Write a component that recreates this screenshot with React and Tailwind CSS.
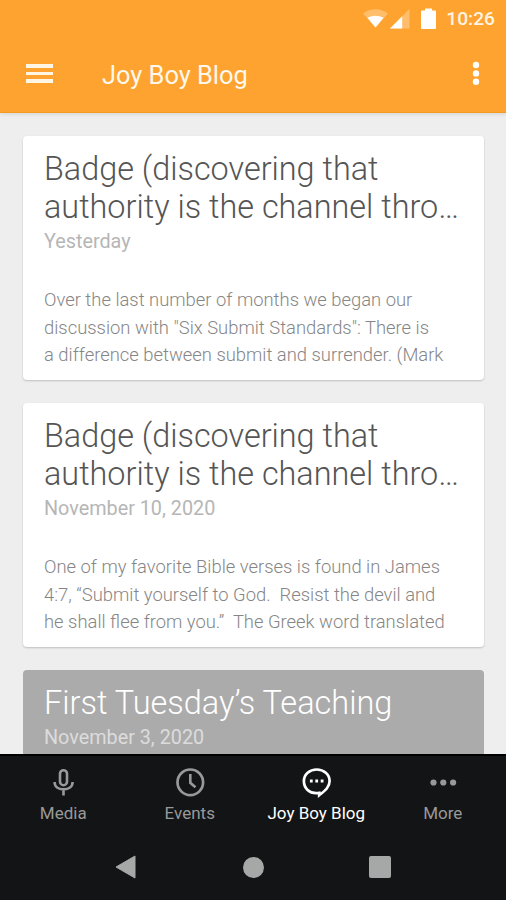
import React from 'react';

const posts = [
  {
    title: ['Badge (discovering that', 'authority is the channel thro…'],
    date: 'Yesterday',
    body: [
      'Over the last number of months we began our',
      'discussion with "Six Submit Standards": There is',
      'a difference between submit and surrender. (Mark',
    ],
  },
  {
    title: ['Badge (discovering that', 'authority is the channel thro…'],
    date: 'November 10, 2020',
    body: [
      'One of my favorite Bible verses is found in James',
      '4:7, “Submit yourself to God.  Resist the devil and',
      'he shall flee from you.”  The Greek word translated',
    ],
  },
];

function StatusBar() {
  return (
    <div className="flex h-[37px] items-center justify-end pr-[11px]">
      <svg width="25" height="20" viewBox="0 0 25 20" className="mr-[2px]">
        <path d="M0 4.4Q12.5 -4 25 4.4L12.5 18.5Z" fill="#ffbe6c" />
        <path d="M4.4 8.8Q12.5 4.6 20.6 8.8L12.5 18.5Z" fill="#fff" />
      </svg>
      <svg width="20" height="20" viewBox="0 0 20 20" className="mr-[11px]">
        <path d="M19.5 0V19.5H0Z" fill="#ffbe6c" />
        <path d="M12.2 7.3V19.5H0Z" fill="#fff" />
      </svg>
      <svg width="15" height="22" viewBox="0 0 15 22" className="mr-[10px]">
        <path d="M4 0.5H11V2.5H14Q15 2.5 15 3.5V20Q15 21 14 21H1Q0 21 0 20V3.5Q0 2.5 1 2.5H4Z" fill="#fff" />
      </svg>
      <span className="text-[19.2px] font-medium leading-[22px] text-[#fff4e2]">10:26</span>
    </div>
  );
}

function Header() {
  return (
    <header className="relative z-10 h-[113px] shrink-0 border-b border-[#f29b20] bg-[#fea32f] shadow-[0_1px_4px_rgba(0,0,0,0.12)]">
      <StatusBar />
      <div className="flex h-[75px] items-center pl-[26px] pr-[26px]">
        <div className="-mt-[2px] flex w-[27px] flex-col gap-1">
          <span className="h-[3.5px] bg-[#fff6e4]" />
          <span className="h-[3.5px] bg-[#fff6e4]" />
          <span className="h-[3.5px] bg-[#fff6e4]" />
        </div>
        <h1 className="ml-[49px] whitespace-nowrap text-[25.4px] leading-8 text-[#fff8ec]">Joy Boy Blog</h1>
        <svg width="8" height="24" viewBox="0 0 8 24" className="-mt-[3px] ml-auto" fill="#fff">
          <circle cx="4" cy="4" r="3.2" />
          <circle cx="4" cy="12.4" r="3.2" />
          <circle cx="4" cy="20.8" r="3.2" />
        </svg>
      </div>
    </header>
  );
}

function PostCard({ post }) {
  return (
    <article className="h-[244px] shrink-0 whitespace-pre rounded-[4px] bg-white pl-[21px] pt-[14px] font-light shadow-[0_1px_2px_rgba(0,0,0,0.2)]">
      <h2 className="text-[32.4px] leading-[38px] text-[#555]">
        {post.title.map((line) => (
          <div key={line}>{line}</div>
        ))}
      </h2>
      <p className="mt-[4px] text-[19.8px] font-normal leading-6 text-[#b6b6b6]">{post.date}</p>
      <div className="mt-[32px] text-[18.4px] leading-[27.5px] text-[#868686]">
        {post.body.map((line) => (
          <div key={line}>{line}</div>
        ))}
      </div>
    </article>
  );
}

function Tab({ label, active, children }) {
  return (
    <div className={`flex flex-1 flex-col items-center ${active ? 'text-white' : 'text-[#999]'}`}>
      <svg width="32" height="32" viewBox="0 0 32 32" fill="none" stroke="currentColor">
        {children}
      </svg>
      <span className="mt-[5px] whitespace-nowrap text-[17px] leading-5">{label}</span>
    </div>
  );
}

export default function App() {
  return (
    <div className="flex h-[900px] w-[506px] flex-col overflow-hidden bg-[#eeeeee] font-['Roboto',sans-serif]">
      <Header />
      <main className="flex min-h-0 flex-1 flex-col gap-[23px] overflow-hidden pl-[23px] pr-[22px] pt-[23px]">
        {posts.map((post) => (
          <PostCard key={post.date} post={post} />
        ))}
        <article className="h-[244px] shrink-0 whitespace-nowrap rounded-[4px] bg-[#ababab] pl-[21px] pt-[14px]">
          <h2 className="text-[32.5px] font-light leading-[38px] text-white">First Tuesday’s Teaching</h2>
          <p className="mt-[4px] text-[19.8px] leading-6 text-[#dcdcdc]">November 3, 2020</p>
        </article>
      </main>
      <footer className="h-[146px] shrink-0 border-t-2 border-black bg-[#121415]">
        <nav className="flex pt-[10px]">
          <Tab label="Media">
            <rect x="13" y="4.2" width="7" height="15" rx="3.5" strokeWidth="2.6" />
            <path d="M7.6 16C7.6 21 11.4 23.4 16.5 23.4S25.6 21 25.6 16M16.5 23.4V29.6" strokeWidth="2.6" />
          </Tab>
          <Tab label="Events">
            <circle cx="16.3" cy="16.3" r="12.8" strokeWidth="2.7" />
            <path d="M16.3 8V16.8L21.5 21.2" strokeWidth="2.6" />
          </Tab>
          <Tab label="Joy Boy Blog" active>
            <path d="M17.8 27.1C9 28 3.9 21.8 3.9 15.3C3.9 8.2 9.6 3.5 16.7 3.5S29.6 8.2 29.6 15C29.6 21.5 24.5 25 19.2 29.2V26.9Z" strokeWidth="2.7" />
            <path d="M9.9 15H12.7M15.3 15H18.1M20.7 15H23.5" strokeWidth="2.8" />
          </Tab>
          <Tab label="More">
            <g fill="currentColor" stroke="none">
              <circle cx="6.5" cy="16.5" r="3.1" />
              <circle cx="16.3" cy="16.5" r="3.1" />
              <circle cx="26.1" cy="16.5" r="3.1" />
            </g>
          </Tab>
        </nav>
        <div className="mt-[32px] flex items-center pl-[115px]">
          <svg width="21" height="24" viewBox="0 0 21 24">
            <path d="M1 12L20 1V23Z" fill="#a6a8a7" stroke="#a6a8a7" strokeLinejoin="round" />
          </svg>
          <span className="ml-[107px] size-[21px] rounded-full bg-[#a6a8a7]" />
          <span className="ml-[105px] size-[22px] rounded-[2px] bg-[#a6a8a7]" />
        </div>
      </footer>
    </div>
  );
}
